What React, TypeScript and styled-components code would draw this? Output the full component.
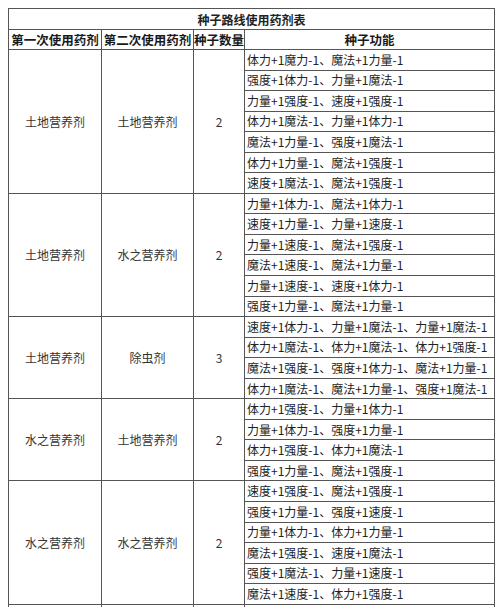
import React from "react";
import styled, { createGlobalStyle } from "styled-components";

const Global = createGlobalStyle`
  html, body { margin: 0; padding: 0; background: #fff; }
  body { padding: 8px 0 0 8px; font-family: "Noto Sans CJK SC", "Noto Sans", sans-serif; }
`;

const Table = styled.table`
  border-collapse: collapse;
  table-layout: fixed;
  width: 486px;
  font-size: 12px;
  color: #222;
  border: 1px solid #555;
`;

const Row = styled.tr<{ $h?: number }>`
  height: ${(p) => p.$h ?? 20.55}px;
`;

const TitleCell = styled.th`
  border: 1px solid #555;
  font-weight: bold;
  font-size: 12px;
  text-align: center;
  padding: 0;
  color: #222;
`;

const HeadCell = styled.th`
  border: 1px solid #555;
  font-weight: bold;
  font-size: 12.5px;
  text-align: center;
  padding: 0;
  white-space: nowrap;
  overflow: hidden;
  color: #1a1a1a;
`;

const GroupCell = styled.td`
  border: 1px solid #555;
  text-align: center;
  vertical-align: middle;
  padding: 0;
  color: #333;
`;

const EffectCell = styled.td`
  border: 1px solid #555;
  padding: 0 0 0 2px;
  white-space: nowrap;
  overflow: hidden;
  line-height: 1;
  color: #222;
`;

type Group = { a: string; b: string; n: number; rows: string[] };

const groups: Group[] = [
  {
    a: "土地营养剂",
    b: "土地营养剂",
    n: 2,
    rows: [
      "体力+1魔力-1、魔法+1力量-1",
      "强度+1体力-1、力量+1魔法-1",
      "力量+1强度-1、速度+1强度-1",
      "体力+1魔法-1、力量+1体力-1",
      "魔法+1力量-1、强度+1魔法-1",
      "体力+1力量-1、魔法+1强度-1",
      "速度+1魔法-1、魔法+1强度-1",
    ],
  },
  {
    a: "土地营养剂",
    b: "水之营养剂",
    n: 2,
    rows: [
      "力量+1体力-1、魔法+1体力-1",
      "速度+1力量-1、力量+1速度-1",
      "力量+1速度-1、魔法+1强度-1",
      "魔法+1速度-1、魔法+1力量-1",
      "力量+1速度-1、速度+1体力-1",
      "强度+1力量-1、魔法+1力量-1",
    ],
  },
  {
    a: "土地营养剂",
    b: "除虫剂",
    n: 3,
    rows: [
      "速度+1体力-1、力量+1魔法-1、力量+1魔法-1",
      "体力+1魔法-1、体力+1魔法-1、体力+1强度-1",
      "魔法+1强度-1、强度+1体力-1、魔法+1力量-1",
      "体力+1魔法-1、魔法+1力量-1、强度+1魔法-1",
    ],
  },
  {
    a: "水之营养剂",
    b: "土地营养剂",
    n: 2,
    rows: [
      "体力+1强度-1、力量+1体力-1",
      "力量+1体力-1、强度+1力量-1",
      "体力+1强度-1、体力+1魔法-1",
      "强度+1力量-1、魔法+1强度-1",
    ],
  },
  {
    a: "水之营养剂",
    b: "水之营养剂",
    n: 2,
    rows: [
      "速度+1强度-1、魔法+1强度-1",
      "强度+1力量-1、强度+1速度-1",
      "力量+1体力-1、体力+1力量-1",
      "魔法+1强度-1、速度+1魔法-1",
      "强度+1魔法-1、力量+1速度-1",
      "魔法+1速度-1、体力+1强度-1",
    ],
  },
];

export default function App() {
  return (
    <>
      <Global />
      <Table>
        <colgroup>
          <col style={{ width: 93 }} />
          <col style={{ width: 92 }} />
          <col style={{ width: 51 }} />
          <col style={{ width: 250 }} />
        </colgroup>
        <thead>
          <Row $h={21}>
            <TitleCell colSpan={4}>种子路线使用药剂表</TitleCell>
          </Row>
          <Row $h={20}>
            <HeadCell>第一次使用药剂</HeadCell>
            <HeadCell>第二次使用药剂</HeadCell>
            <HeadCell>种子数量</HeadCell>
            <HeadCell>种子功能</HeadCell>
          </Row>
        </thead>
        <tbody>
          {groups.map((g, gi) =>
            g.rows.map((r, ri) => (
              <Row key={`${gi}-${ri}`}>
                {ri === 0 && (
                  <>
                    <GroupCell rowSpan={g.rows.length}>{g.a}</GroupCell>
                    <GroupCell rowSpan={g.rows.length}>{g.b}</GroupCell>
                    <GroupCell rowSpan={g.rows.length}>{g.n}</GroupCell>
                  </>
                )}
                <EffectCell>{r}</EffectCell>
              </Row>
            ))
          )}
          <Row>
            <GroupCell />
            <GroupCell />
            <GroupCell />
            <EffectCell />
          </Row>
        </tbody>
      </Table>
    </>
  );
}
